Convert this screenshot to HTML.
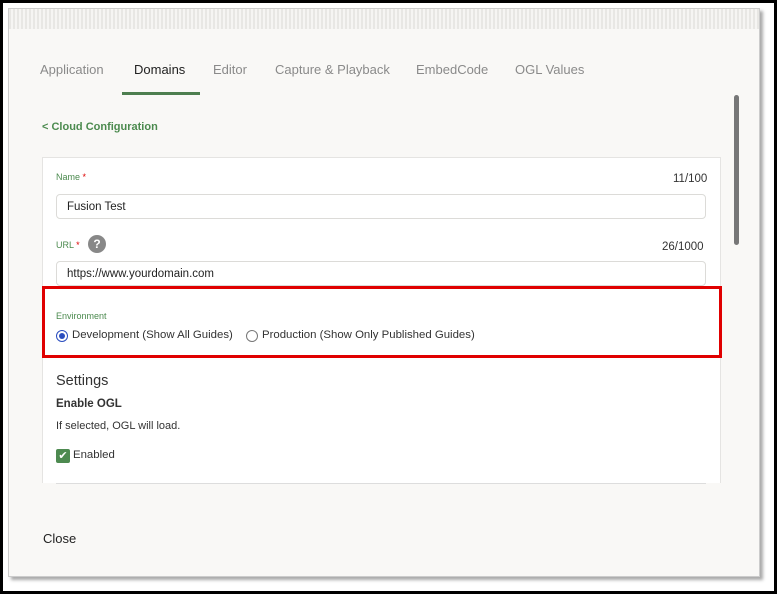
<!DOCTYPE html>
<html><head><style>
*{margin:0;padding:0;box-sizing:border-box}
body{width:777px;height:594px;background:#000;font-family:"Liberation Sans",sans-serif;position:relative;overflow:hidden}
.frame{position:absolute;left:3px;top:3px;width:771px;height:588px;background:#fff}
.dlg{position:absolute;left:8px;top:8px;width:752px;height:569px;background:#f9f8f6;box-shadow:3px 3px 3px #aaa;border:1px solid #ccc}
.strip{position:absolute;left:0;top:0;width:100%;height:20px;background:repeating-linear-gradient(90deg,#e8e7e4 0 2px,#f6f5f3 2px 4px)}
.a{position:absolute;white-space:nowrap}
.tab{top:62px;font-size:13px;color:#8a8a8a}
.card{position:absolute;left:42px;top:157px;width:679px;height:326px;background:#fff;border:1px solid #e5e4e2;border-bottom:none}
.inp{position:absolute;left:56px;width:650px;height:25px;border:1px solid #dcdbd8;border-radius:4px;background:#fff;font-size:11.5px;color:#222;padding:6px 10px}
.lbl{font-size:9px;color:#4b8a4e}
.star{color:#d00}
.cnt{font-size:11.5px;color:#333}
.red{position:absolute;left:42px;top:286px;width:680px;height:72px;border:3px solid #e00000}
.radio{position:absolute;width:12px;height:12px;border-radius:50%;border:1px solid #777;background:#fff}
.t12{font-size:11.4px;color:#333}
</style></head><body>
<div class="frame"></div>
<div class="dlg"><div class="strip"></div></div>
<div class="a tab" style="left:40px">Application</div>
<div class="a tab" style="left:134px;color:#222">Domains</div>
<div style="position:absolute;left:122px;top:92px;width:78px;height:3px;background:#4d7e4f"></div>
<div class="a tab" style="left:213px">Editor</div>
<div class="a tab" style="left:275px">Capture &amp; Playback</div>
<div class="a tab" style="left:416px">EmbedCode</div>
<div class="a tab" style="left:515px">OGL Values</div>
<div class="a" style="left:42px;top:121px;font-size:11px;font-weight:bold;color:#4b8a4e">&lt; Cloud Configuration</div>
<div style="position:absolute;left:734px;top:95px;width:5px;height:150px;border-radius:3px;background:#777"></div>
<div class="card"></div>
<div class="a lbl" style="left:56px;top:172px">Name <span class="star">*</span></div>
<div class="a cnt" style="left:673px;top:173px">11/100</div>
<div class="inp" style="top:194px">Fusion Test</div>
<div class="a lbl" style="left:56px;top:240px">URL <span class="star">*</span></div>
<div style="position:absolute;left:88px;top:235px;width:18px;height:18px;border-radius:50%;background:#888;color:#fff;font-size:12px;font-weight:bold;text-align:center;line-height:18px">?</div>
<div class="a cnt" style="left:662px;top:241px">26/1000</div>
<div class="inp" style="top:261px">https://www.yourdomain.com</div>
<div class="red"></div>
<div class="a lbl" style="left:56px;top:311px">Environment</div>
<div class="radio" style="left:56px;top:330px;border-color:#2a4dbf"><div style="width:6px;height:6px;margin:2px;border-radius:50%;background:#2a4dbf"></div></div>
<div class="a t12" style="left:72px;top:329px">Development (Show All Guides)</div>
<div class="radio" style="left:246px;top:330px"></div>
<div class="a t12" style="left:262px;top:329px">Production (Show Only Published Guides)</div>
<div class="a" style="left:56px;top:373px;font-size:14.5px;color:#333">Settings</div>
<div class="a" style="left:56px;top:398px;font-size:11.5px;font-weight:bold;color:#333">Enable OGL</div>
<div class="a" style="left:56px;top:420px;font-size:11px;color:#333">If selected, OGL will load.</div>
<div style="position:absolute;left:56px;top:449px;width:14px;height:14px;background:#4d8a50;border-radius:2px;color:#fff;font-size:11px;text-align:center;line-height:14px">✔</div>
<div class="a t12" style="left:73px;top:449px">Enabled</div>
<div style="position:absolute;left:56px;top:483px;width:650px;height:1px;background:#ddd"></div>
<div class="a" style="left:43px;top:531px;font-size:13px;color:#222">Close</div>
</body></html>
